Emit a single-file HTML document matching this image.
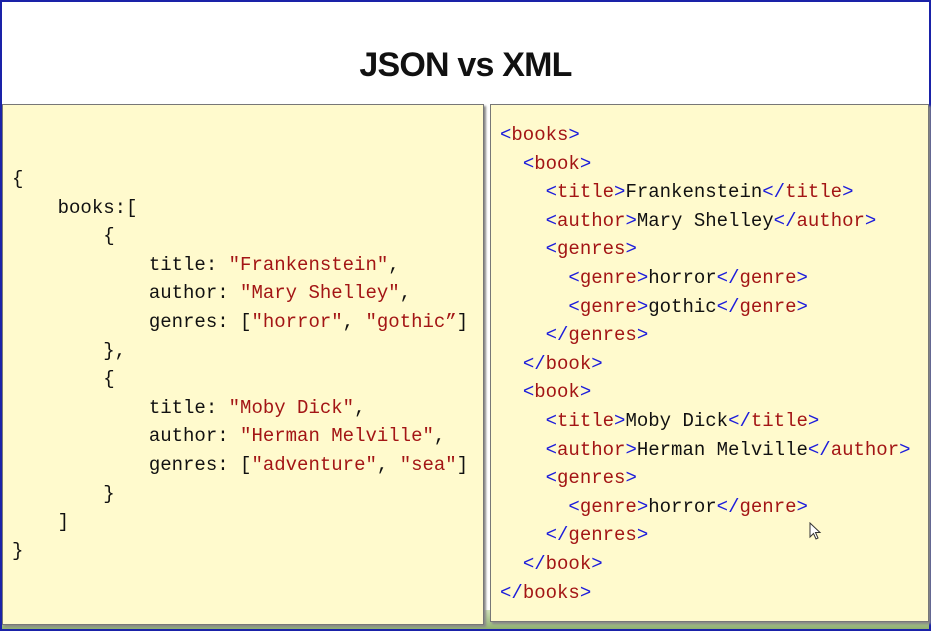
<!DOCTYPE html>
<html><head><meta charset="utf-8"><style>
html,body{margin:0;padding:0}
body{width:931px;height:631px;position:relative;overflow:hidden;background:#fff;font-family:"Liberation Sans",sans-serif}
.frame{position:absolute;left:0;top:0;width:927px;height:627px;border:2px solid #1a22a8}
.bottom{position:absolute;left:2px;top:610px;width:927px;height:19px;background:linear-gradient(#cfe0b8,#8fb070)}
h1{position:absolute;left:0;width:931px;top:46px;margin:0;text-align:center;font-size:34px;font-weight:bold;letter-spacing:-0.8px;color:#111}
.panel{position:absolute;background:#fffacd;border:1px solid #777;box-shadow:2px 2px 2px #888}
pre{margin:0;font-family:"Liberation Mono",monospace;font-size:19px;line-height:28.6px;color:#111;position:absolute}
.s{color:#a31515}.b{color:#1c1cdb}.t{color:#a31515}
.cur{position:absolute;left:809px;top:522px}
</style></head><body>
<div class="frame"></div>
<div class="bottom"></div>
<h1>JSON vs XML</h1>
<div class="panel" style="left:2px;top:104px;width:480px;height:519px">
<pre style="left:9px;top:60px">{
    books:[
        {
            title: <span class="s">"Frankenstein"</span>,
            author: <span class="s">"Mary Shelley"</span>,
            genres: [<span class="s">"horror"</span>, <span class="s">"gothic”</span>]
        },
        {
            title: <span class="s">"Moby Dick"</span>,
            author: <span class="s">"Herman Melville"</span>,
            genres: [<span class="s">"adventure"</span>, <span class="s">"sea"</span>]
        }
    ]
}</pre>
</div>
<div class="panel" style="left:490px;top:104px;width:437px;height:516px">
<pre style="left:9px;top:16px"><span class="b">&lt;</span><span class="t">books</span><span class="b">&gt;</span>
  <span class="b">&lt;</span><span class="t">book</span><span class="b">&gt;</span>
    <span class="b">&lt;</span><span class="t">title</span><span class="b">&gt;</span>Frankenstein<span class="b">&lt;/</span><span class="t">title</span><span class="b">&gt;</span>
    <span class="b">&lt;</span><span class="t">author</span><span class="b">&gt;</span>Mary Shelley<span class="b">&lt;/</span><span class="t">author</span><span class="b">&gt;</span>
    <span class="b">&lt;</span><span class="t">genres</span><span class="b">&gt;</span>
      <span class="b">&lt;</span><span class="t">genre</span><span class="b">&gt;</span>horror<span class="b">&lt;/</span><span class="t">genre</span><span class="b">&gt;</span>
      <span class="b">&lt;</span><span class="t">genre</span><span class="b">&gt;</span>gothic<span class="b">&lt;/</span><span class="t">genre</span><span class="b">&gt;</span>
    <span class="b">&lt;/</span><span class="t">genres</span><span class="b">&gt;</span>
  <span class="b">&lt;/</span><span class="t">book</span><span class="b">&gt;</span>
  <span class="b">&lt;</span><span class="t">book</span><span class="b">&gt;</span>
    <span class="b">&lt;</span><span class="t">title</span><span class="b">&gt;</span>Moby Dick<span class="b">&lt;/</span><span class="t">title</span><span class="b">&gt;</span>
    <span class="b">&lt;</span><span class="t">author</span><span class="b">&gt;</span>Herman Melville<span class="b">&lt;/</span><span class="t">author</span><span class="b">&gt;</span>
    <span class="b">&lt;</span><span class="t">genres</span><span class="b">&gt;</span>
      <span class="b">&lt;</span><span class="t">genre</span><span class="b">&gt;</span>horror<span class="b">&lt;/</span><span class="t">genre</span><span class="b">&gt;</span>
    <span class="b">&lt;/</span><span class="t">genres</span><span class="b">&gt;</span>
  <span class="b">&lt;/</span><span class="t">book</span><span class="b">&gt;</span>
<span class="b">&lt;/</span><span class="t">books</span><span class="b">&gt;</span></pre>
</div>
<svg class="cur" width="14" height="20" viewBox="0 0 14 20"><path d="M1 1 L1 15 L4.5 11.5 L7 17 L9 16 L6.5 10.5 L11 10.5 Z" fill="#fff" stroke="#333" stroke-width="1"/></svg>
</body></html>
